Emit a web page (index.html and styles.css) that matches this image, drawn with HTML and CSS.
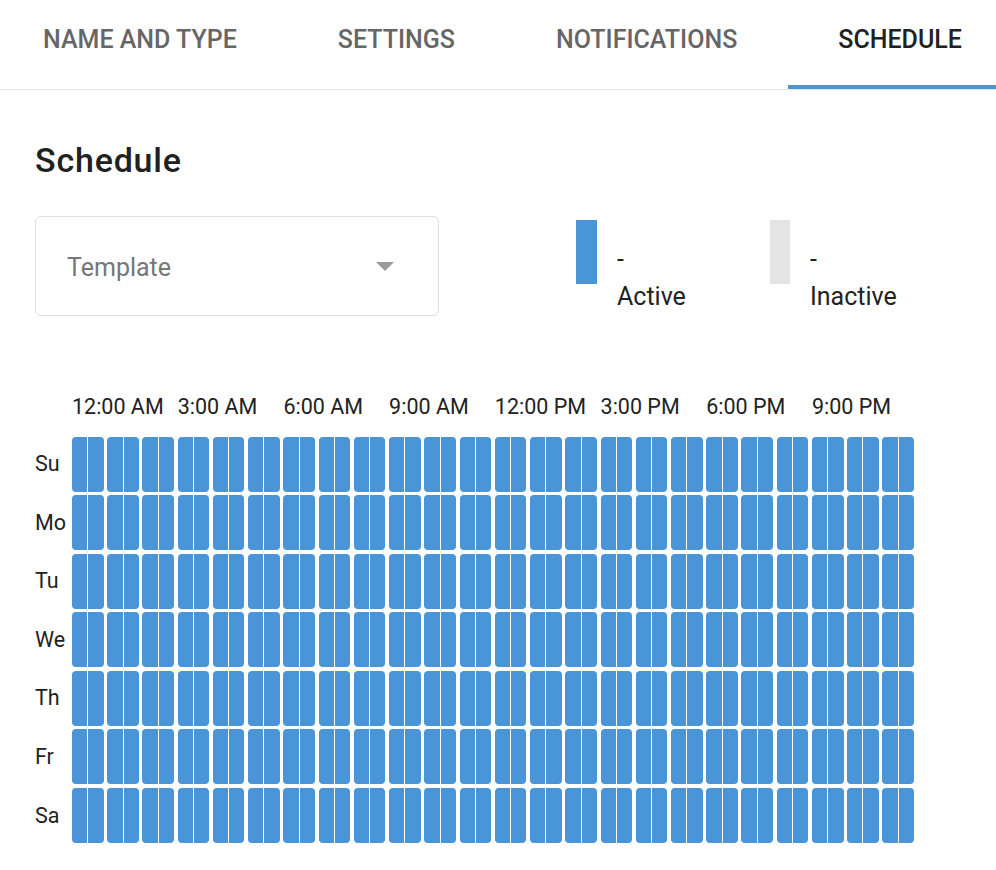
FILE: index.html
```html
<!DOCTYPE html>
<html lang="en">
<head>
<meta charset="utf-8">
<title>Schedule</title>
<link rel="stylesheet" href="styles.css">
</head>
<body>
<nav class="tabs">
  <div class="tab">Name and type</div>
  <div class="tab">Settings</div>
  <div class="tab">Notifications</div>
  <div class="tab active">Schedule</div>
</nav>
<main class="content">
  <h1 class="title">Schedule</h1>
  <div class="controls">
    <div class="select">
      <span>Template</span>
      <svg class="caret" width="18" height="9" viewBox="0 0 18 9"><path d="M0 0 L18 0 L9 9 Z" fill="#9a9a9a"/></svg>
    </div>
    <div class="legend">
      <div class="legend-item">
        <span class="swatch active"></span>
        <div class="legend-text"><div>-</div><div>Active</div></div>
      </div>
      <div class="legend-item">
        <span class="swatch inactive"></span>
        <div class="legend-text"><div>-</div><div>Inactive</div></div>
      </div>
    </div>
  </div>
  <div class="schedule">
    <div class="corner"></div>
    <div class="time">12:00 AM</div>
    <div class="time">3:00 AM</div>
    <div class="time">6:00 AM</div>
    <div class="time">9:00 AM</div>
    <div class="time">12:00 PM</div>
    <div class="time">3:00 PM</div>
    <div class="time">6:00 PM</div>
    <div class="time">9:00 PM</div>

    <div class="day">Su</div>
    <div class="hr"><span></span><span></span></div><div class="hr"><span></span><span></span></div><div class="hr"><span></span><span></span></div><div class="hr"><span></span><span></span></div><div class="hr"><span></span><span></span></div><div class="hr"><span></span><span></span></div><div class="hr"><span></span><span></span></div><div class="hr"><span></span><span></span></div><div class="hr"><span></span><span></span></div><div class="hr"><span></span><span></span></div><div class="hr"><span></span><span></span></div><div class="hr"><span></span><span></span></div><div class="hr"><span></span><span></span></div><div class="hr"><span></span><span></span></div><div class="hr"><span></span><span></span></div><div class="hr"><span></span><span></span></div><div class="hr"><span></span><span></span></div><div class="hr"><span></span><span></span></div><div class="hr"><span></span><span></span></div><div class="hr"><span></span><span></span></div><div class="hr"><span></span><span></span></div><div class="hr"><span></span><span></span></div><div class="hr"><span></span><span></span></div><div class="hr"><span></span><span></span></div>

    <div class="day">Mo</div>
    <div class="hr"><span></span><span></span></div><div class="hr"><span></span><span></span></div><div class="hr"><span></span><span></span></div><div class="hr"><span></span><span></span></div><div class="hr"><span></span><span></span></div><div class="hr"><span></span><span></span></div><div class="hr"><span></span><span></span></div><div class="hr"><span></span><span></span></div><div class="hr"><span></span><span></span></div><div class="hr"><span></span><span></span></div><div class="hr"><span></span><span></span></div><div class="hr"><span></span><span></span></div><div class="hr"><span></span><span></span></div><div class="hr"><span></span><span></span></div><div class="hr"><span></span><span></span></div><div class="hr"><span></span><span></span></div><div class="hr"><span></span><span></span></div><div class="hr"><span></span><span></span></div><div class="hr"><span></span><span></span></div><div class="hr"><span></span><span></span></div><div class="hr"><span></span><span></span></div><div class="hr"><span></span><span></span></div><div class="hr"><span></span><span></span></div><div class="hr"><span></span><span></span></div>

    <div class="day">Tu</div>
    <div class="hr"><span></span><span></span></div><div class="hr"><span></span><span></span></div><div class="hr"><span></span><span></span></div><div class="hr"><span></span><span></span></div><div class="hr"><span></span><span></span></div><div class="hr"><span></span><span></span></div><div class="hr"><span></span><span></span></div><div class="hr"><span></span><span></span></div><div class="hr"><span></span><span></span></div><div class="hr"><span></span><span></span></div><div class="hr"><span></span><span></span></div><div class="hr"><span></span><span></span></div><div class="hr"><span></span><span></span></div><div class="hr"><span></span><span></span></div><div class="hr"><span></span><span></span></div><div class="hr"><span></span><span></span></div><div class="hr"><span></span><span></span></div><div class="hr"><span></span><span></span></div><div class="hr"><span></span><span></span></div><div class="hr"><span></span><span></span></div><div class="hr"><span></span><span></span></div><div class="hr"><span></span><span></span></div><div class="hr"><span></span><span></span></div><div class="hr"><span></span><span></span></div>

    <div class="day">We</div>
    <div class="hr"><span></span><span></span></div><div class="hr"><span></span><span></span></div><div class="hr"><span></span><span></span></div><div class="hr"><span></span><span></span></div><div class="hr"><span></span><span></span></div><div class="hr"><span></span><span></span></div><div class="hr"><span></span><span></span></div><div class="hr"><span></span><span></span></div><div class="hr"><span></span><span></span></div><div class="hr"><span></span><span></span></div><div class="hr"><span></span><span></span></div><div class="hr"><span></span><span></span></div><div class="hr"><span></span><span></span></div><div class="hr"><span></span><span></span></div><div class="hr"><span></span><span></span></div><div class="hr"><span></span><span></span></div><div class="hr"><span></span><span></span></div><div class="hr"><span></span><span></span></div><div class="hr"><span></span><span></span></div><div class="hr"><span></span><span></span></div><div class="hr"><span></span><span></span></div><div class="hr"><span></span><span></span></div><div class="hr"><span></span><span></span></div><div class="hr"><span></span><span></span></div>

    <div class="day">Th</div>
    <div class="hr"><span></span><span></span></div><div class="hr"><span></span><span></span></div><div class="hr"><span></span><span></span></div><div class="hr"><span></span><span></span></div><div class="hr"><span></span><span></span></div><div class="hr"><span></span><span></span></div><div class="hr"><span></span><span></span></div><div class="hr"><span></span><span></span></div><div class="hr"><span></span><span></span></div><div class="hr"><span></span><span></span></div><div class="hr"><span></span><span></span></div><div class="hr"><span></span><span></span></div><div class="hr"><span></span><span></span></div><div class="hr"><span></span><span></span></div><div class="hr"><span></span><span></span></div><div class="hr"><span></span><span></span></div><div class="hr"><span></span><span></span></div><div class="hr"><span></span><span></span></div><div class="hr"><span></span><span></span></div><div class="hr"><span></span><span></span></div><div class="hr"><span></span><span></span></div><div class="hr"><span></span><span></span></div><div class="hr"><span></span><span></span></div><div class="hr"><span></span><span></span></div>

    <div class="day">Fr</div>
    <div class="hr"><span></span><span></span></div><div class="hr"><span></span><span></span></div><div class="hr"><span></span><span></span></div><div class="hr"><span></span><span></span></div><div class="hr"><span></span><span></span></div><div class="hr"><span></span><span></span></div><div class="hr"><span></span><span></span></div><div class="hr"><span></span><span></span></div><div class="hr"><span></span><span></span></div><div class="hr"><span></span><span></span></div><div class="hr"><span></span><span></span></div><div class="hr"><span></span><span></span></div><div class="hr"><span></span><span></span></div><div class="hr"><span></span><span></span></div><div class="hr"><span></span><span></span></div><div class="hr"><span></span><span></span></div><div class="hr"><span></span><span></span></div><div class="hr"><span></span><span></span></div><div class="hr"><span></span><span></span></div><div class="hr"><span></span><span></span></div><div class="hr"><span></span><span></span></div><div class="hr"><span></span><span></span></div><div class="hr"><span></span><span></span></div><div class="hr"><span></span><span></span></div>

    <div class="day">Sa</div>
    <div class="hr"><span></span><span></span></div><div class="hr"><span></span><span></span></div><div class="hr"><span></span><span></span></div><div class="hr"><span></span><span></span></div><div class="hr"><span></span><span></span></div><div class="hr"><span></span><span></span></div><div class="hr"><span></span><span></span></div><div class="hr"><span></span><span></span></div><div class="hr"><span></span><span></span></div><div class="hr"><span></span><span></span></div><div class="hr"><span></span><span></span></div><div class="hr"><span></span><span></span></div><div class="hr"><span></span><span></span></div><div class="hr"><span></span><span></span></div><div class="hr"><span></span><span></span></div><div class="hr"><span></span><span></span></div><div class="hr"><span></span><span></span></div><div class="hr"><span></span><span></span></div><div class="hr"><span></span><span></span></div><div class="hr"><span></span><span></span></div><div class="hr"><span></span><span></span></div><div class="hr"><span></span><span></span></div><div class="hr"><span></span><span></span></div><div class="hr"><span></span><span></span></div>
  </div>
</main>
</body>
</html>
```

FILE: styles.css
```css
html, body {
  margin: 0;
  background: #ffffff;
}

body {
  font-family: Roboto, "Liberation Sans", sans-serif;
  color: #222222;
  overflow: hidden;
}

.tabs {
  display: flex;
  border-bottom: 1px solid #e3e3e3;
  overflow: hidden;
}

.tab {
  flex: none;
  padding: 22px 50.5px 27px;
  font-size: 25px;
  line-height: 36px;
  font-weight: 500;
  text-transform: uppercase;
  color: #666666;
  white-space: nowrap;
  border-bottom: 4px solid transparent;
}

.tab:first-child {
  padding-left: 43px;
}

.tab.active {
  color: #212121;
  border-bottom-color: #4a94d8;
}

.content {
  padding: 0 35px;
}

.title {
  margin: 52px 0 0;
  font-size: 34px;
  line-height: 36px;
  font-weight: 500;
  letter-spacing: 0.8px;
  color: #212121;
}

.controls {
  display: flex;
  margin-top: 38px;
}

.select {
  flex: none;
  box-sizing: border-box;
  width: 404px;
  height: 100px;
  border: 1px solid #dedede;
  border-radius: 6px;
  display: flex;
  align-items: center;
  justify-content: space-between;
  padding: 2px 44px 0 31px;
  font-size: 25px;
  color: #777777;
}

.caret {
  display: block;
  margin-top: -2px;
}

.legend {
  display: flex;
  margin-left: 137px;
  padding-top: 4px;
}

.legend-item {
  flex: none;
  display: flex;
  align-items: flex-start;
  width: 194px;
}

.swatch {
  flex: none;
  display: block;
  width: 21px;
  height: 64px;
  margin-right: 20px;
  background: #4a94d8;
}

.swatch.inactive {
  width: 20px;
  background: #e4e4e4;
}

.legend-text {
  margin-top: 21px;
  font-size: 25px;
  line-height: 37px;
  color: #222222;
}

.schedule {
  display: grid;
  grid-template-columns: 33.3px repeat(24, 1fr);
  grid-template-rows: auto repeat(7, 55px);
  column-gap: 3.7px;
  row-gap: 3.55px;
  width: 879px;
  margin-top: 75px;
}

.time {
  grid-column: span 3;
  font-size: 21.5px;
  line-height: 31.5px;
  white-space: nowrap;
  margin-bottom: 10.5px;
  color: #222222;
}

.day {
  align-self: center;
  font-size: 21.5px;
  line-height: 31.5px;
  color: #222222;
}

.hr {
  display: flex;
  gap: 1px;
  border-radius: 4px;
  overflow: hidden;
}

.hr span {
  flex: 1;
  background: #4a94d8;
}
```
